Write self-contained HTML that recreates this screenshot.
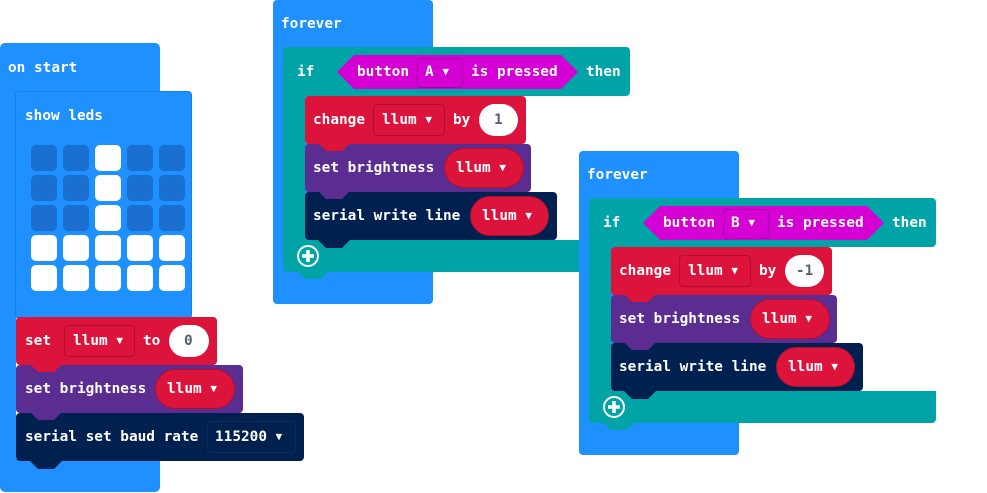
<!DOCTYPE html>
<html><head><meta charset="utf-8"><style>
body{margin:0;width:987px;height:493px;background:#fff;position:relative;overflow:hidden;font-family:"DejaVu Sans Mono","Liberation Mono",monospace;font-weight:bold;font-size:14.4px;color:#fff}
.b{position:absolute;border-radius:4px}
.t{position:absolute;white-space:pre;line-height:16px}
.tab{position:absolute;width:32px;height:8px;clip-path:polygon(0 0,100% 0,75% 100%,25% 100%)}
.dd{position:absolute;border-radius:4px;box-sizing:border-box}
.ov{position:absolute;border-radius:20px;box-sizing:border-box}
.ar{font-size:11px;vertical-align:1px}
.led{position:absolute;width:26px;height:26px;border-radius:5px}
.off{background:#1a6fcf}.on{background:#fff}
.blue{background:#1e90ff}
.bl2{background:#1e90ff;border:1px solid #1a7fe0;box-sizing:border-box}
.teal{background:#00a4a6}
.red{background:#dc143c}
.pur{background:#5c2d91}
.nav{background:#002050}
.pink{background:#d400d4}
</style></head><body>

<!-- on start -->
<div class="b blue" style="left:0;top:43px;width:160px;height:50px;border-radius:5px 5px 0 0"></div>
<div class="b blue" style="left:0;top:85px;width:16px;height:400px;border-radius:0"></div>
<div class="b blue" style="left:0;top:459px;width:160px;height:33px;border-radius:0 0 5px 5px"></div>
<div class="t" style="left:8px;top:60px">on start</div>
<div class="b bl2" style="left:15px;top:91px;width:177px;height:228px"></div>
<div class="t" style="left:25px;top:108px">show leds</div>
<div id="leds"></div>
<div class="b red" style="left:16px;top:317px;width:201px;height:48px"></div>
<div class="t" style="left:25px;top:333px">set</div>
<div class="dd" style="left:64px;top:325px;width:71px;height:32px;border:1px solid #b0102f"></div>
<div class="t" style="left:73px;top:333px">llum <span class="ar">▼</span></div>
<div class="t" style="left:143px;top:333px">to</div>
<div class="ov" style="left:169px;top:325px;width:40px;height:32px;background:#fff"></div>
<div class="t" style="left:184px;top:333px;color:#575e75">0</div>
<div class="b pur" style="left:16px;top:365px;width:227px;height:48px"></div>
<div class="tab red" style="left:30px;top:364px"></div>
<div class="t" style="left:25px;top:381px">set brightness</div>
<div class="ov red" style="left:155px;top:369px;width:80px;height:40px;border:1px solid #b0102f"></div>
<div class="t" style="left:167px;top:381px">llum <span class="ar">▼</span></div>
<div class="b nav" style="left:16px;top:413px;width:288px;height:48px"></div>
<div class="tab pur" style="left:30px;top:412px"></div>
<div class="t" style="left:25px;top:429px">serial set baud rate</div>
<div class="dd" style="left:207px;top:421px;width:89px;height:32px;border:1px solid #0d2a5a"></div>
<div class="t" style="left:215px;top:429px">115200 <span class="ar">▼</span></div>
<div class="tab nav" style="left:30px;top:461px"></div>

<div id="f1"></div>
<div id="f2"></div>

<script>
var L=document.getElementById('leds'),h='';
var pat=['00100','00100','00100','11111','11111'];
for(var r=0;r<5;r++)for(var c=0;c<5;c++)h+='<div class="led '+(pat[r][c]=='1'?'on':'off')+'" style="left:'+(31+c*32)+'px;top:'+(145+r*30)+'px"></div>';
L.innerHTML=h;
function fv(dx,dy,btn,num){
 function p(x,y){return 'left:'+(x+dx)+'px;top:'+(y+dy)+'px;'}
 var s='';
 s+='<div class="b blue" style="'+p(273,0)+'width:160px;height:304px"></div>';
 s+='<div class="t" style="'+p(281,16)+'">forever</div>';
 s+='<div class="b teal" style="'+p(283,47)+'width:347px;height:49px"></div>';
 s+='<div class="b teal" style="'+p(283,90)+'width:22px;height:182px;border-radius:0 0 0 4px"></div>';
 s+='<div class="b teal" style="'+p(283,240)+'width:347px;height:32px;border-radius:0 0 4px 4px"></div>';
 s+='<div class="tab teal" style="'+p(297,271)+'"></div>';
 s+='<div class="t" style="'+p(297,64)+'">if</div>';
 s+='<div class="pink" style="position:absolute;'+p(337,55)+'width:241px;height:34px;clip-path:polygon(0 50%,17px 0,calc(100% - 17px) 0,100% 50%,calc(100% - 17px) 100%,17px 100%)"></div>';
 s+='<div class="t" style="'+p(357,64)+'">button</div>';
 s+='<div class="dd" style="'+p(417,58)+'width:46px;height:30px;border:1px solid #a800a8"></div>';
 s+='<div class="t" style="'+p(425,64)+'">'+btn+' <span class="ar">▼</span></div>';
 s+='<div class="t" style="'+p(471,64)+'">is pressed</div>';
 s+='<div class="t" style="'+p(586,64)+'">then</div>';
 s+='<div class="b red" style="'+p(305,96)+'width:221px;height:48px"></div>';
 s+='<div class="t" style="'+p(313,112)+'">change</div>';
 s+='<div class="dd" style="'+p(373,104)+'width:72px;height:32px;border:1px solid #b0102f"></div>';
 s+='<div class="t" style="'+p(382,112)+'">llum <span class="ar">▼</span></div>';
 s+='<div class="t" style="'+p(453,112)+'">by</div>';
 s+='<div class="ov" style="'+p(479,104)+'width:39px;height:32px;background:#fff"></div>';
 s+='<div class="t" style="'+p(num.length>1?490:494,112)+'color:#575e75">'+num+'</div>';
 s+='<div class="b pur" style="'+p(305,144)+'width:226px;height:48px"></div>';
 s+='<div class="tab red" style="'+p(318,143)+'"></div>';
 s+='<div class="t" style="'+p(313,160)+'">set brightness</div>';
 s+='<div class="ov red" style="'+p(444,148)+'width:80px;height:40px;border:1px solid #b0102f"></div>';
 s+='<div class="t" style="'+p(456,160)+'">llum <span class="ar">▼</span></div>';
 s+='<div class="b nav" style="'+p(305,192)+'width:252px;height:48px"></div>';
 s+='<div class="tab pur" style="'+p(318,191)+'"></div>';
 s+='<div class="t" style="'+p(313,208)+'">serial write line</div>';
 s+='<div class="ov red" style="'+p(470,196)+'width:79px;height:40px;border:1px solid #b0102f"></div>';
 s+='<div class="t" style="'+p(482,208)+'">llum <span class="ar">▼</span></div>';
 s+='<div class="tab nav" style="'+p(318,240)+'"></div>';
 s+='<svg style="position:absolute;'+p(296,244)+'" width="24" height="24"><circle cx="12" cy="12" r="10" fill="none" stroke="#fff" stroke-width="2"/><path d="M12 6v12M6 12h12" stroke="#fff" stroke-width="3.5"/></svg>';
 return s;
}
document.getElementById('f1').innerHTML=fv(0,0,'A','1');
document.getElementById('f2').innerHTML=fv(306,151,'B','-1');
</script>
</body></html>
